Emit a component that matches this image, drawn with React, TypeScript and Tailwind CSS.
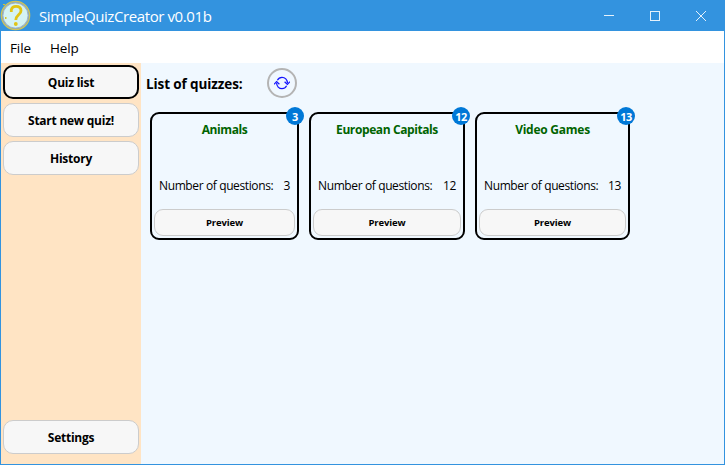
import React from "react";

type Quiz = { name: string; count: number; width: string; tracking: string };

const quizzes: Quiz[] = [
  { name: "Animals", count: 3, width: "w-[149px]", tracking: "tracking-[-0.4px]" },
  { name: "European Capitals", count: 12, width: "w-[156px]", tracking: "tracking-[-0.4px]" },
  { name: "Video Games", count: 13, width: "w-[155px]", tracking: "tracking-[-0.25px]" },
];

function AppIcon() {
  return (
    <svg className="h-[31px] w-[31px]" viewBox="0 0 31 31" fill="none">
      <circle cx="15.5" cy="15.5" r="14.2" fill="#8faab0" stroke="#cfc458" strokeWidth="1.2" />
      <circle cx="15.5" cy="15.5" r="12.6" fill="#d5f3f3" stroke="#a0b3c8" strokeWidth="1" />
      <path d="M11.3 12V9.6C12 7 14 6.3 16 6.3C19.5 6.3 21 8 21 10.7C21 14.8 15.8 15 15.8 20" stroke="#e2c414" strokeWidth="2.8" />
      <circle cx="15.8" cy="24" r="1.9" fill="#e2c414" />
      <path d="M3 4h2v1H3zM5 17h1.5v2H5z" fill="#d8c52e" />
    </svg>
  );
}

function WindowControls() {
  return (
    <svg className="mr-px h-[31px] w-[138px]" viewBox="0 0 138 31" fill="none" stroke="#e4f1fb" shapeRendering="crispEdges">
      <path d="M18 15.5h10" />
      <rect x="64.5" y="11.5" width="9" height="9" />
      <path d="M110 11l10 10M120 11l-10 10" shapeRendering="auto" />
    </svg>
  );
}

function SideButton({ label, active = false }: { label: string; active?: boolean }) {
  return (
    <button
      className={`flex h-[34px] w-full shrink-0 items-center justify-center rounded-[10px] bg-[#f7f7f7] pt-px text-[12px] font-bold tracking-[-0.25px] ${
        active ? "border-2 border-black" : "border border-[#cccccc]"
      }`}
    >
      {label}
    </button>
  );
}

function QuizCard({ quiz }: { quiz: Quiz }) {
  return (
    <div className={`relative flex h-32 flex-col rounded-[9px] border-2 border-black p-0.5 ${quiz.width}`}>
      <h2 className={`mt-1 text-center text-[12px] leading-5 font-bold text-[#006400] ${quiz.tracking}`}>{quiz.name}</h2>
      <p className="mt-9 flex justify-between pr-[5px] pl-[5px] text-[12px] leading-5 whitespace-nowrap">
        <span className="tracking-[-0.38px]">Number of questions:</span>
        <span className="tracking-[-0.3px]">{quiz.count}</span>
      </p>
      <button className="mt-auto h-[27px] rounded-[9px] border border-[#cccccc] bg-[#f7f7f7] pt-0.5 text-[9.5px] font-bold tracking-[-0.1px]">
        Preview
      </button>
      <span className="absolute -top-[7px] -right-[7px] flex h-[18px] w-[18px] items-center justify-center rounded-full bg-[#0078d7] pt-0.5 text-[11px] font-bold tracking-[-0.5px] text-white">
        {quiz.count}
      </span>
    </div>
  );
}

export default function App() {
  return (
    <div className="flex h-[465px] w-[725px] flex-col overflow-hidden bg-[#3393df] font-['Open_Sans','Noto_Sans',sans-serif] text-black">
      <header className="flex h-[31px] shrink-0 items-center">
        <AppIcon />
        <h1 className="ml-2 pt-0.5 text-[15px] tracking-[-0.4px] text-white">SimpleQuizCreator v0.01b</h1>
        <div className="ml-auto">
          <WindowControls />
        </div>
      </header>
      <div className="mx-px mb-px flex min-h-0 flex-1 flex-col">
        <nav className="flex h-8 shrink-0 items-center gap-[19px] bg-white pt-0.5 pl-[9px] text-[13.5px] tracking-[-0.1px]">
          <span>File</span>
          <span>Help</span>
        </nav>
        <div className="flex min-h-0 flex-1">
          <aside className="flex w-[140px] shrink-0 flex-col gap-1 bg-[#ffe4c4] px-0.5 pt-0.5 pb-[10px]">
            <SideButton label="Quiz list" active />
            <SideButton label="Start new quiz!" />
            <SideButton label="History" />
            <div className="flex-1" />
            <SideButton label="Settings" />
          </aside>
          <main className="flex-1 bg-[#f0f8ff] pt-[5px]">
            <div className="flex h-[30px] items-center pl-[5px]">
              <h2 className="w-[121px] pt-0.5 text-[13.5px] font-bold tracking-[-0.1px] whitespace-nowrap">List of quizzes:</h2>
              <button className="flex h-[30px] w-[30px] items-center justify-center rounded-full border-2 border-[#b4b4b4]">
                <svg className="h-4 w-4 shrink-0" viewBox="0 0 16 16" fill="none" stroke="#1414ff" strokeWidth="1.2">
                  <path d="M3.4 5.2C4.4 3.3 6 2.3 8 2.3C11 2.3 13.4 4.8 13.4 8M12.6 10.8C11.6 12.7 10 13.7 8 13.7C5 13.7 2.6 11.2 2.6 8" />
                  <path d="M0 9.3L2.6 6.6L5.4 9.3M10.6 6.7L13.4 9.4L16 6.7" />
                </svg>
              </button>
            </div>
            <section className="mt-[14px] flex gap-[10px] pl-[9px]">
              {quizzes.map((quiz) => (
                <QuizCard key={quiz.name} quiz={quiz} />
              ))}
            </section>
          </main>
        </div>
      </div>
    </div>
  );
}
